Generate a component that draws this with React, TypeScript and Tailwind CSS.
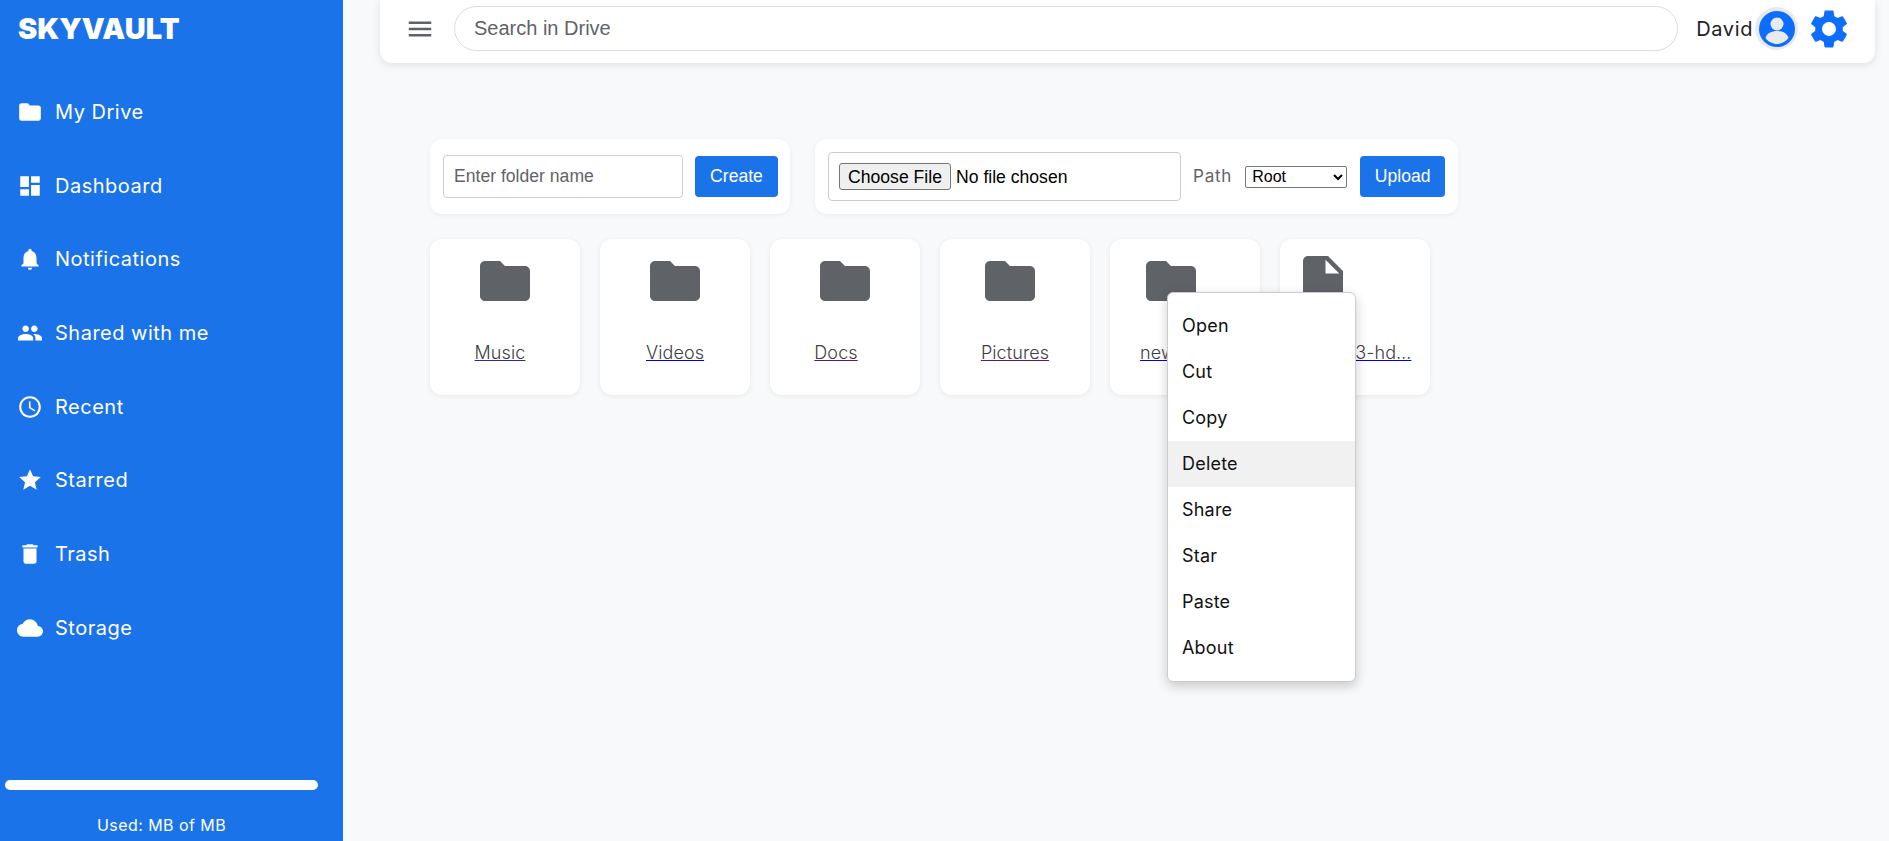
import {
  MdAccessTime,
  MdCloud,
  MdDashboard,
  MdDelete,
  MdFolder,
  MdInsertDriveFile,
  MdMenu,
  MdNotifications,
  MdPeople,
  MdSettings,
  MdStar,
} from "react-icons/md";

const poppins = "font-['Inter',sans-serif]";
const arial = "font-['Liberation_Sans',Arial,sans-serif]";

const navItems = [
  { label: "My Drive", icon: MdFolder },
  { label: "Dashboard", icon: MdDashboard },
  { label: "Notifications", icon: MdNotifications },
  { label: "Shared with me", icon: MdPeople },
  { label: "Recent", icon: MdAccessTime },
  { label: "Starred", icon: MdStar },
  { label: "Trash", icon: MdDelete },
  { label: "Storage", icon: MdCloud },
];

const driveItems = [
  { name: "Music", icon: MdFolder, iconClass: "", labelClass: "mr-[10px] decoration-[#3a1fb0]" },
  { name: "Videos", icon: MdFolder, iconClass: "", labelClass: "decoration-[#0000ee]" },
  { name: "Docs", icon: MdFolder, iconClass: "", labelClass: "mr-[18px] decoration-[#551a8b]" },
  { name: "Pictures", icon: MdFolder, iconClass: "mr-[10px]", labelClass: "decoration-[#551a8b]" },
  { name: "new folder", icon: MdFolder, iconClass: "mr-[28px]", labelClass: "decoration-[#0000ee]" },
  { name: "image-3-hd…", icon: MdInsertDriveFile, iconClass: "mr-[65px]", labelClass: "mr-[3px] decoration-[#0000ee]" },
];

const menuItems = ["Open", "Cut", "Copy", "Delete", "Share", "Star", "Paste", "About"];

function Sidebar() {
  return (
    <aside className={`${poppins} flex h-full w-[343px] shrink-0 flex-col bg-[#1a73e8] text-white`}>
      <div className="pl-[18px] pt-[11px] text-[29px] font-black leading-[36px]">SKYVAULT</div>
      <nav className="mt-[28px] flex flex-col">
        {navItems.map((item) => (
          <div key={item.label} className="flex h-[73.7px] items-center gap-[12px] pl-[17px] text-[20px] tracking-[0.5px]">
            <item.icon size={26} className="shrink-0" />
            <span>{item.label}</span>
          </div>
        ))}
      </nav>
      <div className="mt-auto pb-[4px] pl-[5px]">
        <div className="h-[10px] w-[313px] rounded-full bg-white" />
        <div className="mt-[23px] w-[313px] text-center text-[16px] leading-[24px] tracking-[0.45px]">Used: MB of MB</div>
      </div>
    </aside>
  );
}

function Header() {
  return (
    <header className="flex h-[63px] items-center rounded-b-xl bg-white pb-[6px] pl-[25px] pr-[23px] shadow-[0_2px_8px_rgba(0,0,0,0.1)]">
      <MdMenu size={30} className="shrink-0 text-[#5f6368]" />
      <input
        placeholder="Search in Drive"
        className={`${arial} ml-[19px] h-[45px] flex-1 rounded-full border border-[#dadce0] px-[19px] text-[20px] outline-none placeholder:text-[#5f6368]`}
      />
      <span className={`${poppins} ml-[18px] text-[20px] tracking-[0.6px] text-[#202124]`}>David</span>
      <div className="ml-[2px] flex h-[43px] w-[43px] items-center justify-center rounded-full bg-[#e8eaed]">
        <svg viewBox="0 0 36 36" className="h-[36px] w-[36px]">
          <circle cx="18" cy="18" r="18" fill="#0d6efd" />
          <circle cx="18" cy="13" r="6.5" fill="#e8eaed" />
          <path d="M6.5 27c1.5-5 6-7 11.5-7s10 2 11.500 7c-2.500 3.500-7 6-11.500 6s-9-2.500-11.500-6z" fill="#e8eaed" />
        </svg>
      </div>
      <MdSettings size={46} className="ml-[8px] shrink-0 text-[#0d6efd]" />
    </header>
  );
}

function Toolbar() {
  return (
    <div className={`${arial} flex gap-[25px]`}>
      <div className="flex h-[75px] w-[360px] items-center gap-[12px] rounded-xl bg-white pl-[13px] pr-[12px] shadow-[0_1px_5px_rgba(0,0,0,0.06)]">
        <input
          placeholder="Enter folder name"
          className="h-[43px] w-[240px] rounded-[4px] border border-[#cccccc] px-[10px] text-[17.6px] outline-none placeholder:text-[#5f6368]"
        />
        <button className="h-[41px] w-[83px] rounded-[4px] bg-[#1a73e8] text-[17.6px] text-white">Create</button>
      </div>
      <div className="flex h-[75px] w-[643px] items-center rounded-xl bg-white pl-[13px] shadow-[0_1px_5px_rgba(0,0,0,0.06)]">
        <div className="flex h-[49px] w-[353px] items-center rounded-[4px] border border-[#cccccc] pl-[10px]">
          <input
            type="file"
            className="w-[330px] text-[17.6px] text-black file:mr-[5px] file:h-[27px] file:w-[112px] file:rounded-[3px] file:border file:border-[#767676] file:bg-[#efefef]"
          />
        </div>
        <span className={`${poppins} ml-[12px] text-[17px] tracking-[0.8px] text-[#5f6368]`}>Path</span>
        <select className="ml-[13px] h-[22px] w-[102px] rounded-[2px] border border-[#767676] bg-white pl-[2px] text-[16px] text-black">
          <option>Root</option>
        </select>
        <button className="ml-[13px] h-[41px] w-[85px] rounded-[4px] bg-[#1a73e8] text-[17.6px] text-white">Upload</button>
      </div>
    </div>
  );
}

function DriveGrid() {
  return (
    <div className="mt-[25px] flex gap-[20px]">
      {driveItems.map((item) => (
        <div key={item.name} className="flex h-[156px] w-[150px] flex-col items-center rounded-xl bg-white pt-[12px] shadow-[0_1px_5px_rgba(0,0,0,0.08)]">
          <item.icon size={60} className={`shrink-0 text-[#5f6368] ${item.iconClass}`} />
          <a href="#" className={`${poppins} mt-[28px] block whitespace-nowrap text-[18px] font-light tracking-[0.1px] text-[#3c4043] underline ${item.labelClass}`}>
            {item.name}
          </a>
        </div>
      ))}
    </div>
  );
}

function ContextMenu() {
  return (
    <ul className={`${poppins} absolute left-[1167px] top-[292px] w-[189px] rounded-[6px] border border-[#cccccc] bg-white pb-[10px] pt-[10px] text-[18px] tracking-[0.2px] text-[#111111] shadow-[0_4px_12px_rgba(0,0,0,0.2)]`}>
      {menuItems.map((label) => (
        <li key={label} className={`flex h-[46px] items-center pb-[1px] pl-[14px] ${label === "Delete" ? "bg-[#f1f1f1]" : ""}`}>
          {label}
        </li>
      ))}
    </ul>
  );
}

export default function App() {
  return (
    <div className="relative flex h-[841px] w-full overflow-hidden bg-[#f8f9fa]">
      <Sidebar />
      <main className="min-w-0 flex-1 pl-[37px] pr-[14px]">
        <Header />
        <div className="pl-[50px] pt-[76px]">
          <Toolbar />
          <DriveGrid />
        </div>
      </main>
      <ContextMenu />
    </div>
  );
}
